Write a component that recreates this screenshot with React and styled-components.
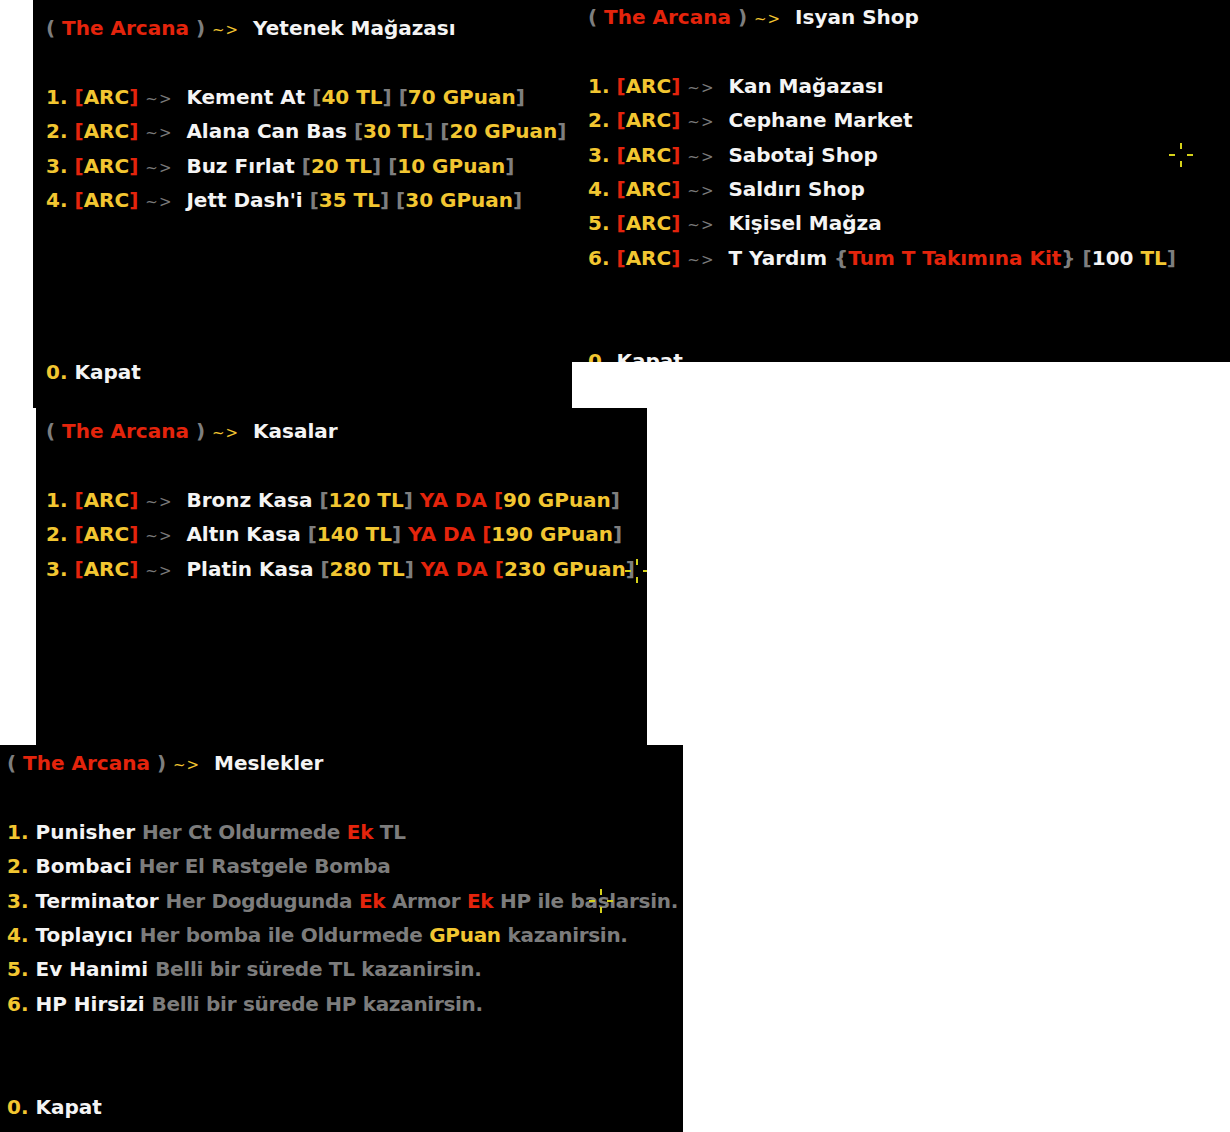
import React from 'react'
import styled, { createGlobalStyle } from 'styled-components'

const GlobalStyle = createGlobalStyle`
  html, body {
    margin: 0;
    padding: 0;
    background: #fff;
  }
`

const LINE = 34.4

// sayfa
const Canvas = styled.div`
  position: relative;
  width: 1230px;
  height: 1132px;
  background: #fff;
  overflow: hidden;
  font-family: 'DejaVu Sans', 'Verdana', sans-serif;
  font-weight: bold;
  font-size: 20px;
`
// menu penceresi
const Panel = styled.div`
  position: absolute;
  left: ${p => p.$x}px;
  top: ${p => p.$y}px;
  width: ${p => p.$w}px;
  height: ${p => p.$h}px;
  padding: ${p => p.$top}px 0 0 ${p => p.$left}px;
  box-sizing: border-box;
  background: #000;
  overflow: hidden;
  display: flex;
  flex-direction: column;
`
const Line = styled.div`
  height: ${LINE}px;
  line-height: ${LINE}px;
  white-space: pre;
  color: #f2f2f2;
`
const Gap = styled.div`
  height: ${LINE}px;
  flex: none;
`
const List = styled.div`
  height: ${LINE * 8}px;
  flex: none;
`

const Gray = styled.span`
  color: #7e7e7e;
`
const Red = styled.span`
  color: #e4240c;
`
const Gold = styled.span`
  color: #f2c631;
`
const White = styled.span`
  color: #f4f4f4;
`
// meslek açıklamaları
const Dim = styled.span`
  color: #7c7c7c;
  letter-spacing: -0.3px;
`
// ~> oku, ince ve küçük
const Arrow = styled.span`
  font-size: 15px;
  font-weight: normal;
  letter-spacing: 1px;
  color: ${p => (p.$gold ? '#f2c631' : '#7a7a7a')};
`

// nişangah
const Cross = styled.svg`
  position: absolute;
  left: ${p => p.$x - 13}px;
  top: ${p => p.$y - 13}px;
  width: 26px;
  height: 26px;
`

const Crosshair = ({ x, y }) => (
  <Cross $x={x} $y={y} viewBox="0 0 26 26">
    <g fill="#d6d21a">
      <rect x="12" y="1" width="2" height="6" />
      <rect x="12" y="19" width="2" height="6" />
      <rect x="1" y="12" width="6" height="2" />
      <rect x="19" y="12" width="6" height="2" />
    </g>
  </Cross>
)

const Title = ({ text }) => (
  <Line>
    <Gray>(</Gray> <Red>The Arcana</Red> <Gray>)</Gray> <Arrow $gold>~&gt;</Arrow>{'  '}
    <White>{text}</White>
  </Line>
)

const Kapat = () => (
  <Line>
    <Gold>0.</Gold> <White>Kapat</White>
  </Line>
)

const Arc = ({ n, children }) => (
  <Line>
    <Gold>{n}.</Gold> <Red>[</Red>
    <Gold>ARC</Gold>
    <Red>]</Red> <Arrow>~&gt;</Arrow>{'  '}
    {children}
  </Line>
)

const Price = ({ children }) => (
  <>
    <Gray>[</Gray>
    <Gold>{children}</Gold>
    <Gray>]</Gray>
  </>
)

const skills = [
  { name: 'Kement At', tl: '40 TL', gp: '70 GPuan' },
  { name: 'Alana Can Bas', tl: '30 TL', gp: '20 GPuan' },
  { name: 'Buz Fırlat', tl: '20 TL', gp: '10 GPuan' },
  { name: "Jett Dash'i", tl: '35 TL', gp: '30 GPuan' }
]

const shops = ['Kan Mağazası', 'Cephane Market', 'Sabotaj Shop', 'Saldırı Shop', 'Kişisel Mağza']

const crates = [
  { name: 'Bronz Kasa', tl: '120 TL', gp: '90 GPuan' },
  { name: 'Altın Kasa', tl: '140 TL', gp: '190 GPuan' },
  { name: 'Platin Kasa', tl: '280 TL', gp: '230 GPuan' }
]

const jobs = [
  { name: 'Punisher', desc: <>Her Ct Oldurmede <Red>Ek</Red> TL</> },
  { name: 'Bombaci', desc: <>Her El Rastgele Bomba</> },
  {
    name: 'Terminator',
    desc: (
      <>
        Her Dogdugunda <Red>Ek</Red> Armor <Red>Ek</Red> HP ile baslarsin.
      </>
    )
  },
  { name: 'Toplayıcı', desc: <>Her bomba ile Oldurmede <Gold>GPuan</Gold> kazanirsin.</> },
  { name: 'Ev Hanimi', desc: <>Belli bir sürede TL kazanirsin.</> },
  { name: 'HP Hirsizi', desc: <>Belli bir sürede HP kazanirsin.</> }
]

export default function App() {
  return (
    <Canvas>
      <GlobalStyle />

      <Panel $x={33} $y={0} $w={539} $h={408} $top={11} $left={13}>
        <Title text="Yetenek Mağazası" />
        <Gap />
        <List>
          {skills.map((s, i) => (
            <Arc n={i + 1} key={s.name}>
              <White>{s.name}</White> <Price>{s.tl}</Price> <Price>{s.gp}</Price>
            </Arc>
          ))}
        </List>
        <Kapat />
      </Panel>

      <Panel $x={572} $y={0} $w={658} $h={362} $top={0} $left={16}>
        <Title text="Isyan Shop" />
        <Gap />
        <List>
          {shops.map((s, i) => (
            <Arc n={i + 1} key={s}>
              <White>{s}</White>
            </Arc>
          ))}
          <Arc n={6}>
            <White>T Yardım</White> <Gray>{'{'}</Gray>
            <Red>Tum T Takımına Kit</Red>
            <Gray>{'}'}</Gray> <Gray>[</Gray>
            <White>100 </White>
            <Gold>TL</Gold>
            <Gray>]</Gray>
          </Arc>
        </List>
        <Kapat />
        <Crosshair x={609} y={155} />
      </Panel>

      <Panel $x={36} $y={408} $w={611} $h={337} $top={6} $left={10}>
        <Title text="Kasalar" />
        <Gap />
        <List>
          {crates.map((c, i) => (
            <Arc n={i + 1} key={c.name}>
              <White>{c.name}</White> <Price>{c.tl}</Price> <Red>YA DA</Red> <Red>[</Red>
              <Gold>{c.gp}</Gold>
              <Gray>]</Gray>
            </Arc>
          ))}
        </List>
        <Crosshair x={601} y={163} />
      </Panel>

      <Panel $x={0} $y={745} $w={683} $h={387} $top={1} $left={7}>
        <Title text="Meslekler" />
        <Gap />
        <List>
          {jobs.map((j, i) => (
            <Line key={j.name}>
              <Gold>{i + 1}.</Gold> <White>{j.name}</White> <Dim>{j.desc}</Dim>
            </Line>
          ))}
        </List>
        <Kapat />
        <Crosshair x={601} y={156} />
      </Panel>
    </Canvas>
  )
}
